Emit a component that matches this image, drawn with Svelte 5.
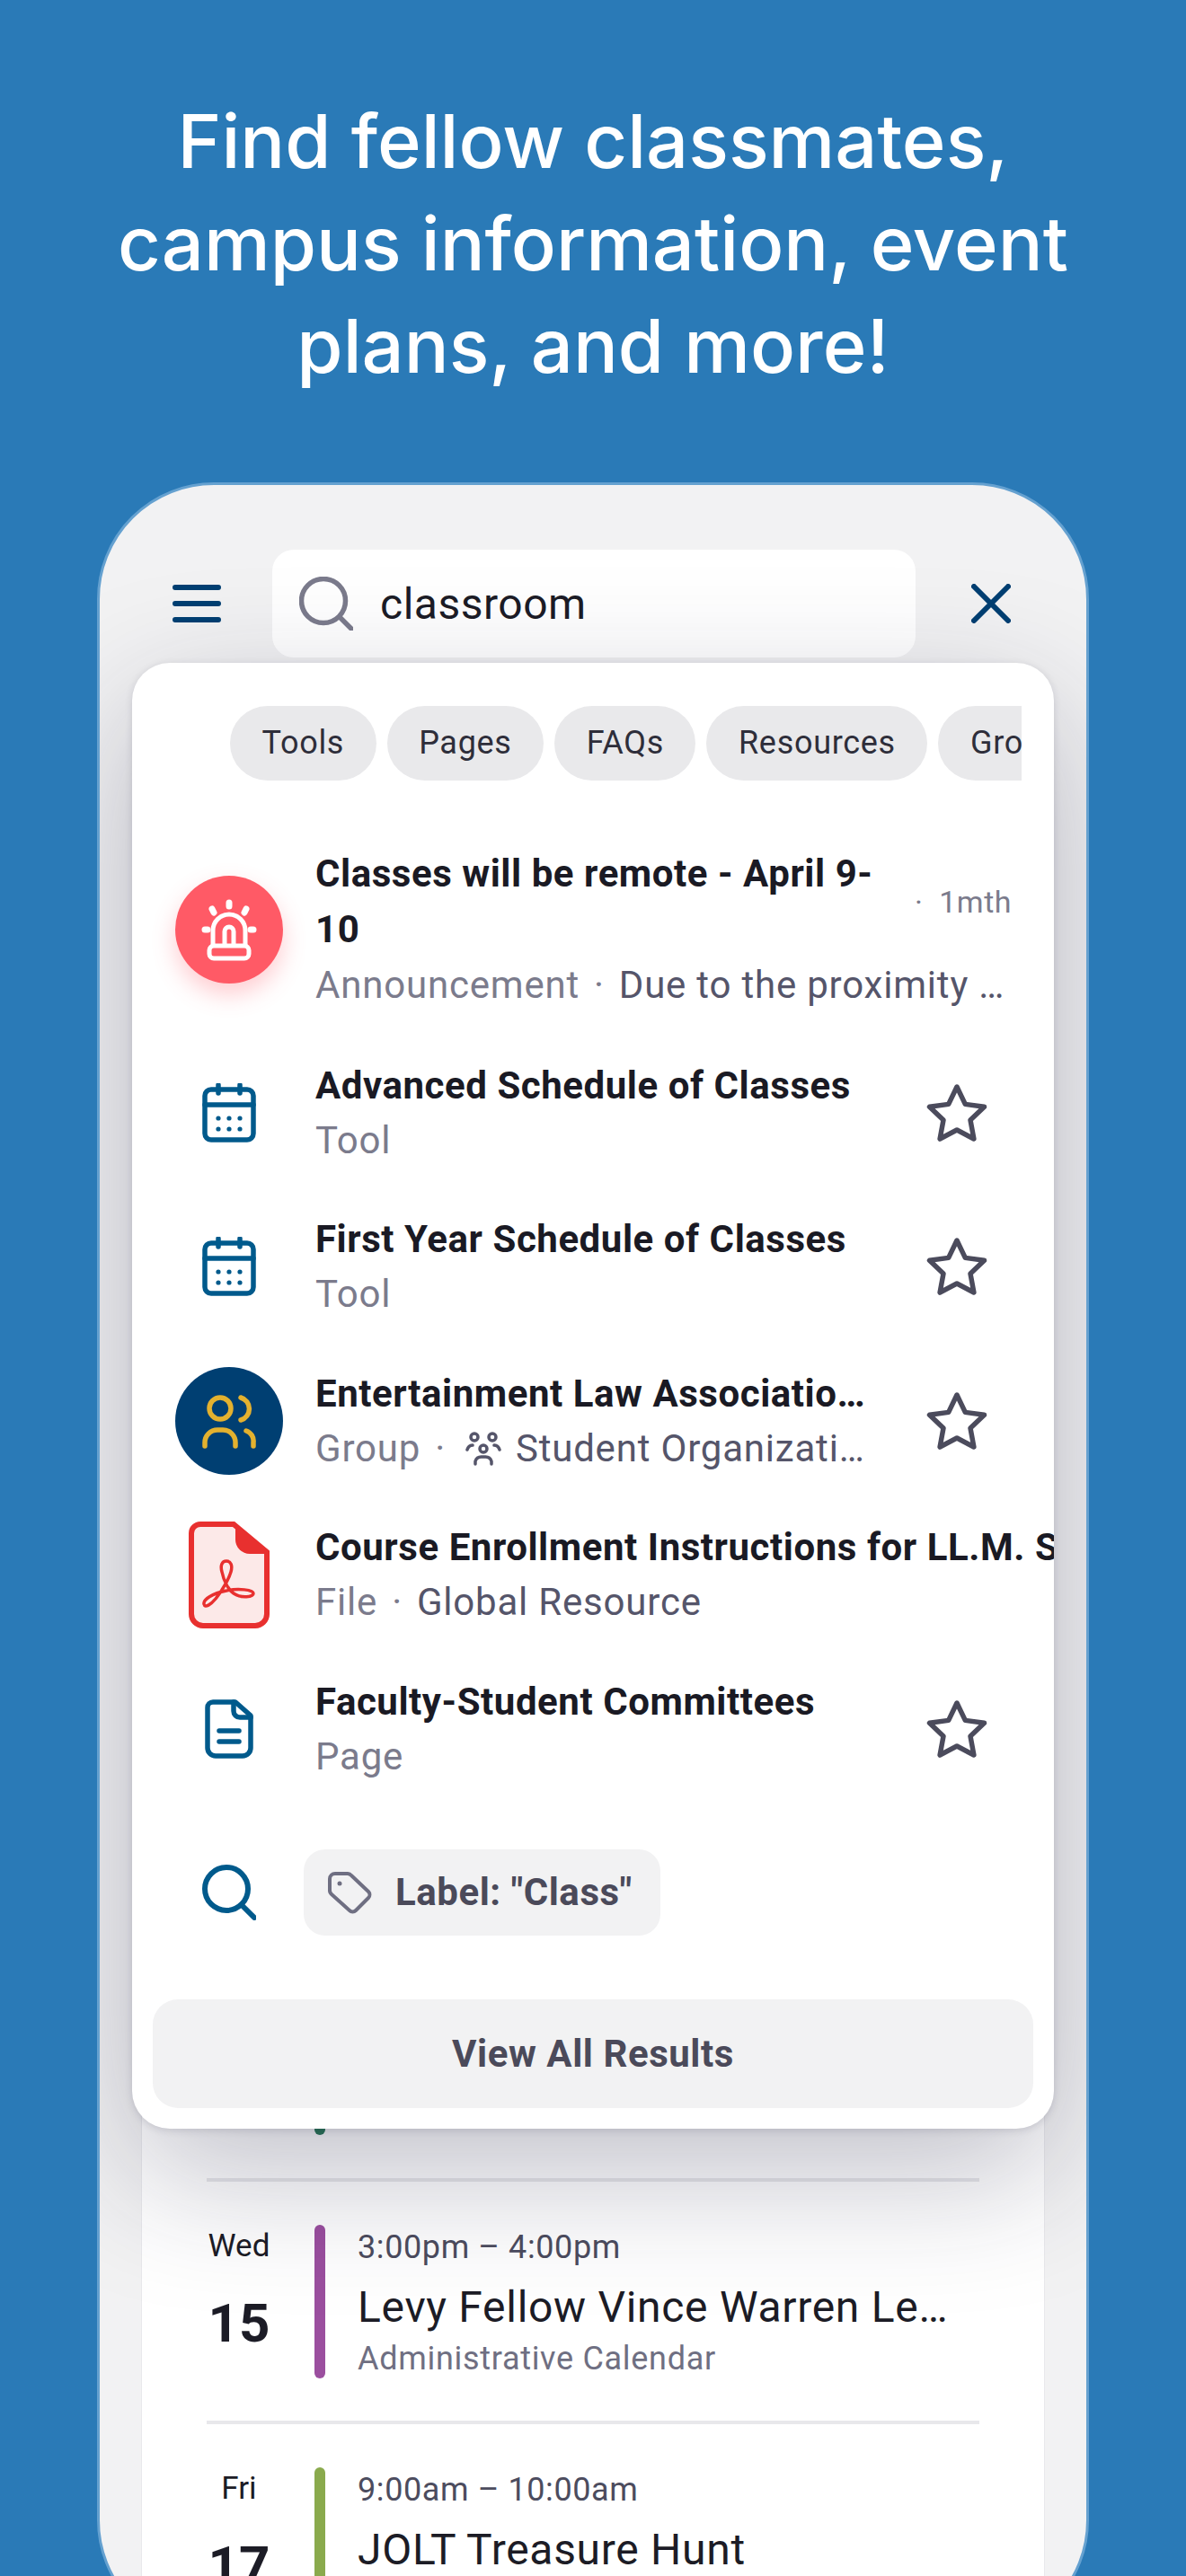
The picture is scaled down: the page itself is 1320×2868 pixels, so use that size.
<script>
  const chips = ['Tools', 'Pages', 'FAQs', 'Resources', 'Groups'];
</script>

<div class="page">
  <h1>Find fellow classmates, campus information, event plans, and more!</h1>

  <div class="phone">
    <header class="top">
      <svg class="menu" viewBox="0 0 54 42" aria-hidden="true">
        <path d="M3 3h48M3 21h48M3 39h48" />
      </svg>
      <div class="search">
        <svg class="search-ico" viewBox="0 0 60 60" aria-hidden="true">
          <circle cx="27" cy="27" r="24.5" />
          <path d="M46 46l12 12" />
        </svg>
        <span>classroom</span>
      </div>
      <svg class="close" viewBox="0 0 44 44" aria-hidden="true">
        <path d="M3 3l38 38M41 3L3 41" />
      </svg>
    </header>

    <section class="calendar">
      <div class="hidden-row"><i class="bar green tall"></i></div>
      <div class="event">
        <div class="date"><span>Wed</span><b>15</b></div>
        <i class="bar purple"></i>
        <div class="info">
          <div class="time">3:00pm – 4:00pm</div>
          <div class="name">Levy Fellow Vince Warren Lecture Series</div>
          <div class="cal">Administrative Calendar</div>
        </div>
      </div>
      <div class="event">
        <div class="date"><span>Fri</span><b>17</b></div>
        <i class="bar olive"></i>
        <div class="info">
          <div class="time">9:00am – 10:00am</div>
          <div class="name">JOLT Treasure Hunt</div>
          <div class="cal">Student Calendar</div>
        </div>
      </div>
    </section>

    <div class="results">
      <div class="chips">
        {#each chips as c}<span class="chip">{c}</span>{/each}
      </div>

      <div class="list">
        <div class="row first">
          <div class="lead">
            <div class="disc red">
              <svg viewBox="0 0 120 120" aria-hidden="true">
                <path d="M42 78V61a18 18 0 0 1 36 0v17M55 78V62a5 5 0 0 1 10 0v16" />
                <rect x="38" y="78" width="44" height="14" rx="5" />
                <path class="ray" d="M60 30v4M41 37l2 4M79 37l-2 4M33 60h3M87 60h-3" />
              </svg>
            </div>
          </div>
          <div class="body wide">
            <div class="head">
              <div class="title wrap">Classes will be remote - April 9-10</div>
              <div class="ago">· &nbsp;1mth</div>
            </div>
            <div class="sub"><span class="kind">Announcement</span><em>·</em><span class="more">Due to the proximity …</span></div>
          </div>
        </div>

        <div class="row">
          <div class="lead">
            <svg class="cal-ico" viewBox="0 0 60 66" aria-hidden="true">
              <rect x="3" y="7" width="54" height="56" rx="7" />
              <path d="M3 24h54M18 2v9M42 2v9" />
              <g class="dots"><circle cx="18" cy="39" r="2.6"/><circle cx="30" cy="39" r="2.6"/><circle cx="42" cy="39" r="2.6"/><circle cx="18" cy="51" r="2.6"/><circle cx="30" cy="51" r="2.6"/><circle cx="42" cy="51" r="2.6"/></g>
            </svg>
          </div>
          <div class="body">
            <div class="title">Advanced Schedule of Classes</div>
            <div class="sub"><span class="kind">Tool</span></div>
          </div>
          <svg class="star" viewBox="0 0 68 66" aria-hidden="true"><path d="M34 4l9.3 19.4 21.2 2.9-15.5 14.7 3.9 21L34 52l-18.9 10 3.9-21L3.5 26.3l21.2-2.9z" /></svg>
        </div>

        <div class="row">
          <div class="lead">
            <svg class="cal-ico" viewBox="0 0 60 66" aria-hidden="true">
              <rect x="3" y="7" width="54" height="56" rx="7" />
              <path d="M3 24h54M18 2v9M42 2v9" />
              <g class="dots"><circle cx="18" cy="39" r="2.6"/><circle cx="30" cy="39" r="2.6"/><circle cx="42" cy="39" r="2.6"/><circle cx="18" cy="51" r="2.6"/><circle cx="30" cy="51" r="2.6"/><circle cx="42" cy="51" r="2.6"/></g>
            </svg>
          </div>
          <div class="body">
            <div class="title">First Year Schedule of Classes</div>
            <div class="sub"><span class="kind">Tool</span></div>
          </div>
          <svg class="star" viewBox="0 0 68 66" aria-hidden="true"><path d="M34 4l9.3 19.4 21.2 2.9-15.5 14.7 3.9 21L34 52l-18.9 10 3.9-21L3.5 26.3l21.2-2.9z" /></svg>
        </div>

        <div class="row">
          <div class="lead">
            <div class="disc navy">
              <svg viewBox="0 0 120 120" aria-hidden="true">
                <circle cx="50" cy="46" r="12" />
                <path d="M33 88v-4a14 14 0 0 1 14-14h6a14 14 0 0 1 14 14v4M73 34a13 13 0 0 1 0 25M79 71a12 12 0 0 1 8 13v4" />
              </svg>
            </div>
          </div>
          <div class="body">
            <div class="title">Entertainment Law Association at Cardozo</div>
            <div class="sub">
              <span class="kind">Group</span><em>·</em>
              <svg class="people" viewBox="0 0 40 40" aria-hidden="true">
                <circle cx="10" cy="8" r="4"/><circle cx="30" cy="8" r="4"/><circle cx="20" cy="21" r="4"/>
                <path d="M2 22a7 7 0 0 1 6-5M38 22a7 7 0 0 0-6-5M11 38v-3a7 7 0 0 1 7-5h4a7 7 0 0 1 7 5v3"/>
              </svg>
              <span class="more clip">Student Organizations and Journals</span>
            </div>
          </div>
          <svg class="star" viewBox="0 0 68 66" aria-hidden="true"><path d="M34 4l9.3 19.4 21.2 2.9-15.5 14.7 3.9 21L34 52l-18.9 10 3.9-21L3.5 26.3l21.2-2.9z" /></svg>
        </div>

        <div class="row">
          <div class="lead">
            <svg class="pdf" viewBox="0 0 90 119" aria-hidden="true">
              <path class="sheet" d="M13 3h37l37 31v69a13 13 0 0 1-13 13H16A13 13 0 0 1 3 103V13A10 10 0 0 1 13 3z" />
              <path class="fold" d="M52 3l35 31v2H68a16 16 0 0 1-16-16z" />
              <path class="logo" d="M37 56c-2-7 0-12 5-12s7 5 5 12c-2 7-9 20-17 30c-5 6-12 11-13 6c-1-5 9-12 25-15c13-3 30-1 30 3s-13 6-22 0c-6-4-11-14-13-24z" />
            </svg>
          </div>
          <div class="body free">
            <div class="title nowrap">Course Enrollment Instructions for LL.M. Students</div>
            <div class="sub"><span class="kind">File</span><em>·</em><span class="more">Global Resource</span></div>
          </div>
        </div>

        <div class="row">
          <div class="lead">
            <svg class="doc" viewBox="0 0 54 66" aria-hidden="true">
              <path d="M9 3h25l17 15v36a9 9 0 0 1-9 9H12a9 9 0 0 1-9-9V9a6 6 0 0 1 6-6z" />
              <path d="M32 3v10a7 7 0 0 0 7 7h12M16 35h22M16 47h22" />
            </svg>
          </div>
          <div class="body">
            <div class="title">Faculty-Student Committees</div>
            <div class="sub"><span class="kind">Page</span></div>
          </div>
          <svg class="star" viewBox="0 0 68 66" aria-hidden="true"><path d="M34 4l9.3 19.4 21.2 2.9-15.5 14.7 3.9 21L34 52l-18.9 10 3.9-21L3.5 26.3l21.2-2.9z" /></svg>
        </div>
      </div>

      <div class="label-row">
        <svg class="find" viewBox="0 0 60 62" aria-hidden="true">
          <circle cx="27" cy="27" r="24" />
          <path d="M44 45l14 14" />
        </svg>
        <div class="label">
          <svg class="tag" viewBox="0 0 50 48" aria-hidden="true">
            <path d="M3 9a6 6 0 0 1 6-6h14a6 6 0 0 1 4 2l19 18a5 5 0 0 1 0 7L32 44a5 5 0 0 1-7 0L5 26a6 6 0 0 1-2-5z" />
            <circle class="hole" cx="14" cy="14" r="2.5" />
          </svg>
          <span>Label: "Class"</span>
        </div>
      </div>

      <div class="all">View All Results</div>
    </div>
  </div>
</div>

<style>
  :global(body) {
    margin: 0;
    background: #2a7ab7;
  }
  .page {
    height: 2868px;
    overflow: hidden;
    background: #2a7ab7;
    font-family: Roboto, "Liberation Sans", sans-serif;
  }
  h1 {
    margin: 0;
    padding: 100px 100px 0;
    height: 537px;
    box-sizing: border-box;
    font-family: Inter, Roboto, sans-serif;
    font-weight: 500;
    font-size: 83px;
    line-height: 114px;
    text-align: center;
    color: #fff;
  }
  .phone {
    position: relative;
    box-sizing: border-box;
    width: 1104px;
    height: 2399px;
    margin-left: 108px;
    border: 3px solid #65a1d0;
    border-radius: 130px;
    background: #f2f2f3;
    overflow: hidden;
  }
  .top {
    display: flex;
    align-items: center;
    height: 120px;
    margin-top: 72px;
    padding-left: 81px;
  }
  .menu { width: 54px; height: 42px; flex: none; }
  .menu path, .close path {
    fill: none;
    stroke: #003f72;
    stroke-width: 6;
    stroke-linecap: round;
  }
  .search {
    display: flex;
    align-items: center;
    box-sizing: border-box;
    width: 716px;
    height: 120px;
    margin-left: 57px;
    padding-left: 30px;
    border-radius: 24px;
    background: #fff;
    font-size: 48px;
    letter-spacing: 0.5px;
    color: #1c1c26;
  }
  .search-ico { width: 60px; height: 60px; margin-right: 30px; }
  .search-ico circle, .search-ico path {
    fill: none;
    stroke: #7b7b8c;
    stroke-width: 5.5;
    stroke-linecap: round;
  }
  .close { width: 44px; height: 44px; margin-left: 62px; }

  .calendar {
    box-sizing: border-box;
    width: 1004px;
    margin: 28px 0 0 47px;
    padding: 0 72px;
    background: #fff;
    box-shadow: 0 0 0 1px #e9e9ec;
  }
  .hidden-row {
    height: 1669px;
    padding-left: 120px;
    border-bottom: 4px solid #e8e8eb;
    box-sizing: border-box;
  }
  .bar {
    display: block;
    flex: none;
    width: 12px;
    height: 171px;
    border-radius: 6px;
  }
  .tall { height: 1617px; }
  .green { background: #2a7a58; }
  .purple { background: #9b4f9f; }
  .olive { background: #8aaa4d; }
  .event {
    display: flex;
    box-sizing: border-box;
    height: 270px;
    padding-top: 48px;
    border-bottom: 4px solid #e8e8eb;
  }
  .date {
    display: flex;
    flex-direction: column;
    align-items: center;
    width: 72px;
    margin-top: 2px;
    margin-right: 48px;
    color: #1c1c26;
  }
  .date span { font-size: 35px; line-height: 44px; }
  .date b { margin-top: 29px; font-size: 60px; line-height: 70px; font-weight: 700; }
  .info { min-width: 0; width: 662px; margin-top: 3px; margin-left: 36px; }
  .time { font-size: 36px; line-height: 44px; letter-spacing: 0.6px; color: #4c4c5e; }
  .name {
    margin-top: 14px;
    font-size: 48px;
    line-height: 62px;
    letter-spacing: 0.7px;
    color: #1c1c26;
    white-space: nowrap;
    overflow: hidden;
    text-overflow: ellipsis;
  }
  .cal { margin-top: 6px; font-size: 36px; line-height: 40px; letter-spacing: 0.7px; color: #6f6f82; }

  .results {
    position: absolute;
    left: 36px;
    top: 198px;
    box-sizing: border-box;
    width: 1026px;
    height: 1632px;
    padding-top: 48px;
    border-radius: 42px;
    background: #fff;
    box-shadow: 0 50px 150px rgba(30, 30, 60, 0.28), 0 2px 8px rgba(30, 30, 60, 0.14);
    overflow: hidden;
  }
  .chips {
    display: flex;
    gap: 12px;
    width: 881px;
    margin-left: 109px;
    overflow: hidden;
  }
  .chip {
    flex: none;
    height: 83px;
    padding: 0 35.5px;
    border-radius: 42px;
    background: #e9e9eb;
    font-size: 36px;
    line-height: 83px;
    letter-spacing: 0.7px;
    color: #2e2e3a;
  }
  .list {
    display: flex;
    flex-direction: column;
    gap: 49.5px;
    margin-top: 73px;
  }
  .row {
    display: flex;
    align-items: center;
    min-height: 122px;
    padding-left: 48px;
  }
  .row.first .title, .row.first .sub { line-height: 62px; }
  .lead {
    display: flex;
    align-items: center;
    justify-content: center;
    flex: none;
    width: 120px;
    margin-right: 36px;
  }
  .disc {
    display: flex;
    width: 120px;
    height: 120px;
    border-radius: 50%;
  }
  .disc svg { width: 120px; height: 120px; }
  .red {
    background: #ff5a66;
    box-shadow: 0 12px 26px rgba(255, 90, 102, 0.3);
  }
  .red path, .red rect { fill: none; stroke: #fff; stroke-width: 5; }
  .red .ray { stroke-width: 7; stroke-linecap: round; }
  .navy { background: #003f72; }
  .navy circle, .navy path {
    fill: none;
    stroke: #e3b12f;
    stroke-width: 5.5;
    stroke-linecap: round;
  }
  .body { width: 612px; min-width: 0; }
  .body.wide { width: 773px; }
  .body.free { width: 800px; flex: none; }
  .head { display: flex; align-items: center; }
  .title {
    font-size: 42px;
    line-height: 61px;
    font-weight: 700;
    letter-spacing: 0.55px;
    color: #1a1a24;
    white-space: nowrap;
    overflow: hidden;
    text-overflow: ellipsis;
  }
  .title.wrap { width: 640px; flex: none; white-space: normal; }
  .title.nowrap { overflow: visible; }
  .ago {
    margin-left: 27px;
    font-size: 34px;
    letter-spacing: 0.5px;
    white-space: nowrap;
    color: #7b7b8c;
  }
  .sub {
    display: flex;
    align-items: center;
    font-size: 42px;
    line-height: 61px;
    letter-spacing: 0.8px;
    color: #7b7b8c;
    white-space: nowrap;
  }
  .sub em {
    font-style: normal;
    margin: 0 16px;
  }
  .more {
    overflow: hidden;
    text-overflow: ellipsis;
    color: #55556a;
  }
  .people {
    flex: none;
    width: 40px;
    height: 40px;
    margin: 0 16px 0 6px;
  }
  .people circle, .people path { fill: none; stroke: #55556a; stroke-width: 3.5; stroke-linecap: round; }
  .star {
    flex: none;
    width: 68px;
    height: 66px;
    margin-left: 68px;
  }
  .star path { fill: none; stroke: #4b4b5c; stroke-width: 5.5; stroke-linejoin: round; }
  .cal-ico { width: 60px; height: 66px; }
  .cal-ico rect, .cal-ico path { fill: none; stroke: #005a8c; stroke-width: 5.5; stroke-linecap: round; }
  .dots circle { fill: #005a8c; }
  .pdf { width: 90px; height: 119px; }
  .sheet { fill: #fce9e8; stroke: #e8302f; stroke-width: 6; }
  .fold { fill: #e8302f; }
  .logo { fill: none; stroke: #e8302f; stroke-width: 3.5; }
  .doc { width: 54px; height: 66px; }
  .doc path { fill: none; stroke: #005a8c; stroke-width: 5.5; stroke-linecap: round; stroke-linejoin: round; }
  .label-row {
    display: flex;
    align-items: center;
    height: 96px;
    margin-top: 73px;
    padding-left: 78px;
  }
  .find { width: 60px; height: 62px; margin-right: 53px; }
  .find circle, .find path { fill: none; stroke: #005a8c; stroke-width: 6; stroke-linecap: round; }
  .label {
    display: flex;
    align-items: center;
    box-sizing: border-box;
    width: 397px;
    height: 96px;
    padding-left: 26px;
    border-radius: 24px;
    background: #f2f2f3;
    font-size: 42px;
    font-weight: 700;
    letter-spacing: 0.55px;
    color: #4b4a5a;
  }
  .tag { width: 50px; height: 48px; margin-right: 26px; }
  .tag path { fill: none; stroke: #6f6f82; stroke-width: 4; stroke-linejoin: round; }
  .hole { fill: #6f6f82; }
  .all {
    margin: 71px 23px 0;
    height: 121px;
    border-radius: 28px;
    background: #f2f2f3;
    text-align: center;
    font-size: 42px;
    line-height: 121px;
    font-weight: 700;
    letter-spacing: 0.55px;
    color: #4b4a5a;
  }
</style>
